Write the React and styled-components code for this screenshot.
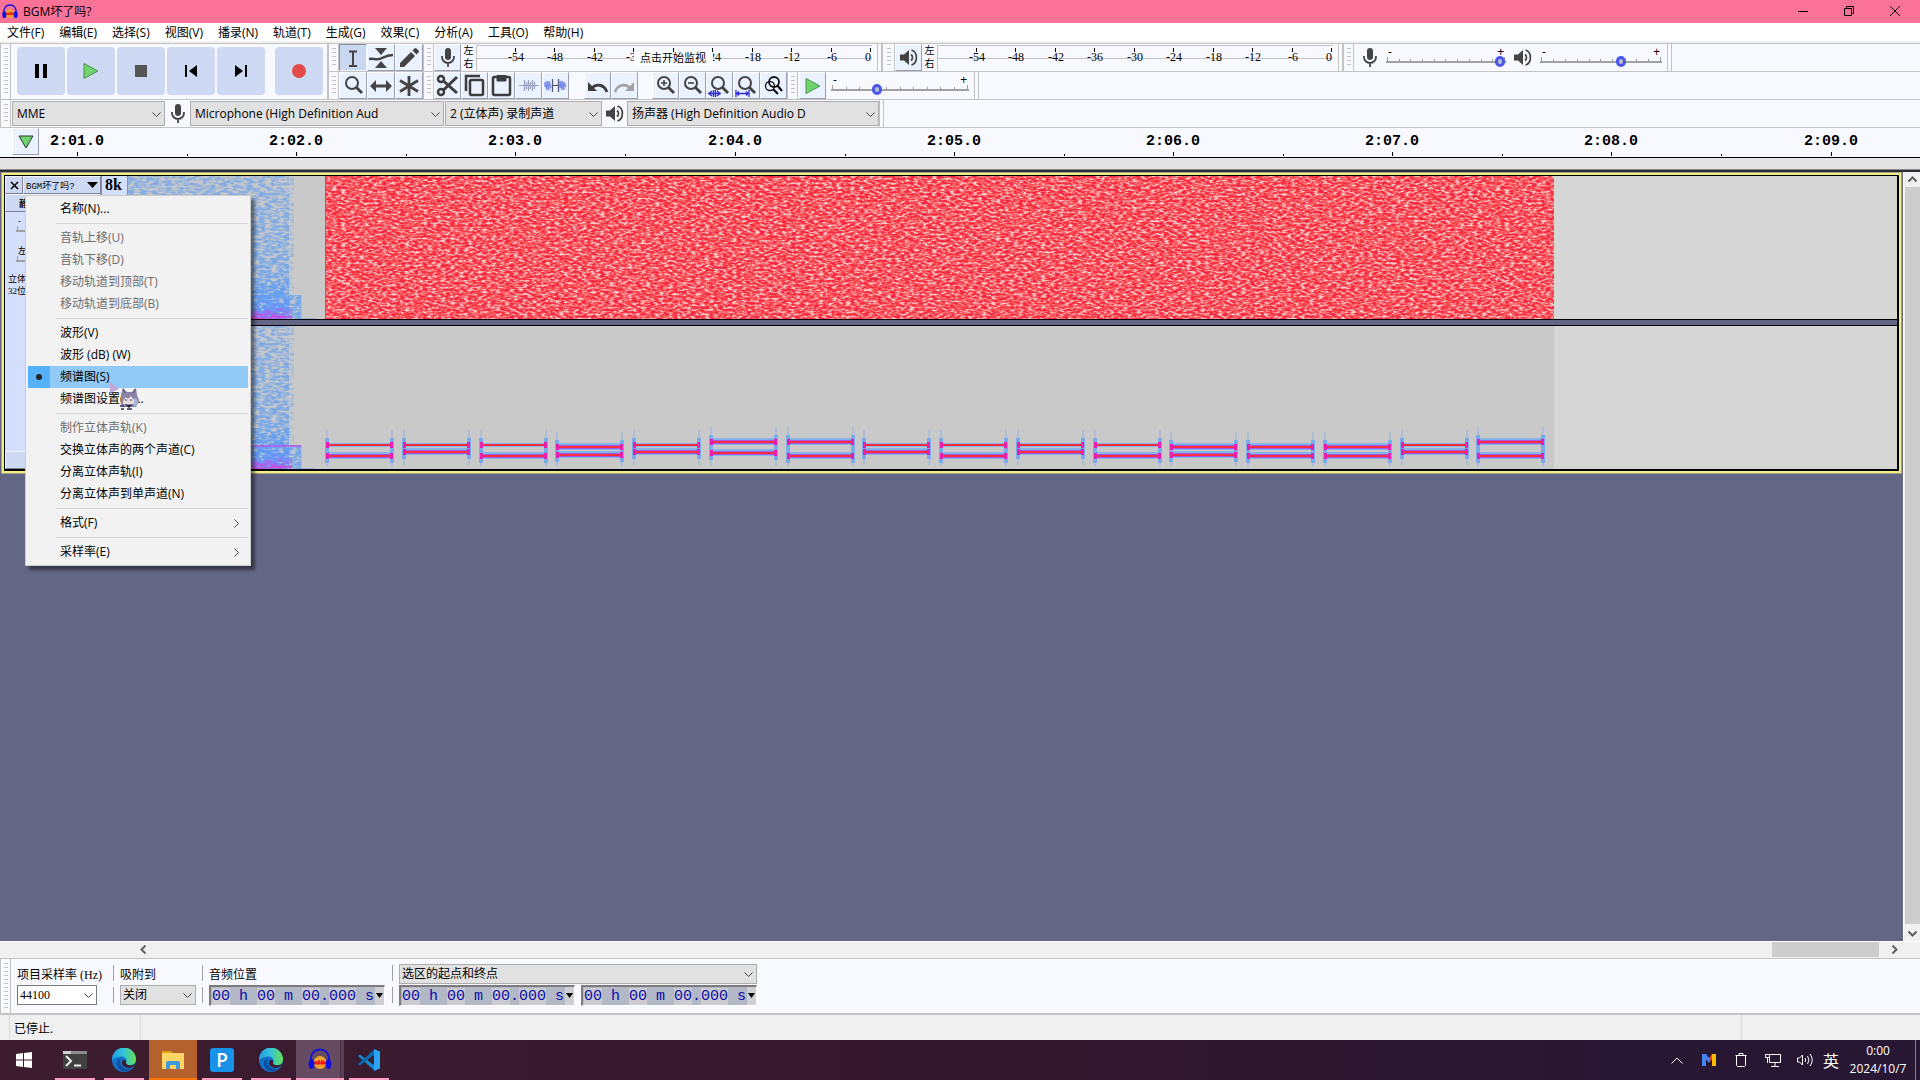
import styled, { createGlobalStyle } from 'styled-components'

const UI = '"Open Sans", "Noto Sans CJK SC", sans-serif'
const SONG = '"Liberation Serif", "Noto Sans CJK SC", serif'
const MONO = '"Liberation Mono", "Noto Sans CJK SC", monospace'

const GlobalStyle = createGlobalStyle`
  * { box-sizing: border-box; }
  body {
    margin: 0;
    background: #646685;
    font-family: ${UI};
    font-size: 12px;
    color: #000;
    overflow: hidden;
  }
  button, input, select {
    font: inherit;
    color: inherit;
    margin: 0;
    padding: 0;
    border: 0;
    border-radius: 0;
    background: none;
    outline: none;
  }
  svg { display: block; }
`

const Page = styled.div`
  min-height: 100vh;
  display: flex;
  flex-direction: column;
`

/* ---------- title + menu ---------- */

const TitleBar = styled.header`
  height: 23px;
  background: #fb7299;
  display: flex;
  align-items: center;
  padding: 0 2px;
`

const TitleText = styled.h1`
  flex: 1;
  margin: 0 0 0 5px;
  font-size: 12px;
  font-weight: 400;
  line-height: 20px;
`

const WindowButton = styled.button`
  width: 46px;
  height: 22px;
  padding-bottom: 2px;
  display: flex;
  align-items: center;
  justify-content: center;
`

const MenuBar = styled.nav`
  height: 20px;
  background: #fff;
  border-bottom: 2px solid #f0f0f0;
  display: flex;
  align-items: flex-start;
  gap: 15px;
  padding-left: 7px;
  button {
    line-height: 20px;
    white-space: nowrap;
  }
`

/* ---------- toolbars ---------- */

const Dock = styled.section`
  background: #f8f9ff;
  border-top: 1px solid #c3c3c3;
`

const DockTop = styled.div`
  display: flex;
`

const Stack = styled.div`
  flex: 1;
  min-width: 0;
`

const BarRow = styled.div`
  height: 28px;
  border-bottom: 1px solid #c3c3c3;
  display: flex;
  align-items: stretch;
`

const Transport = styled.div`
  width: 328px;
  border-right: 1px solid #c3c3c3;
  border-bottom: 1px solid #c3c3c3;
  display: flex;
  gap: 2px;
`

const Gripper = styled.div`
  width: ${(props) => props.w || 11}px;
  flex: none;
  border-left: 1px solid #c3c3c3;
  border-right: 1px solid #c3c3c3;
  display: flex;
  justify-content: center;
  padding: 4px 0;
  &::before {
    content: '';
    width: 4px;
    background: repeating-linear-gradient(#c3c3c3 0 1px, transparent 1px 4px);
  }
`

const EndCap = styled.div`
  width: ${(props) => props.w || 10}px;
  flex: none;
  display: flex;
  justify-content: flex-end;
  &::before {
    content: '';
    width: 3px;
    border-left: 1px solid #c3c3c3;
    border-right: 1px solid #c3c3c3;
  }
`

const Space = styled.div`
  width: ${(props) => props.w}px;
  flex: none;
`

const BigButton = styled.button`
  width: 48px;
  height: 48px;
  margin-top: 3px;
  margin-left: ${(props) => (props.apart ? '8px' : '0')};
  border-radius: 4px;
  background: #cdd9f2;
  display: flex;
  align-items: center;
  justify-content: center;
`

const ToolButton = styled.button`
  width: ${(props) => (props.wide ? 28 : 27)}px;
  height: 27px;
  flex: none;
  display: flex;
  align-items: center;
  justify-content: center;
  background: ${(props) => (props.on ? '#cad7f0' : '#eaf1ff')};
  border: 1px solid;
  border-color: ${(props) => (props.on ? '#8b8f9e #eef2ff #eef2ff #8b8f9e' : '#fff #9a9eb0 #9a9eb0 #fff')};
`

const IconBox = styled.span`
  width: ${(props) => props.w}px;
  flex: none;
  display: flex;
  align-items: center;
  justify-content: center;
`

const Channels = styled.div`
  width: 15px;
  flex: none;
  font-size: 10px;
  line-height: 13px;
  text-align: center;
`

const MeterSvg = styled.svg`
  flex: none;
  font-family: ${SONG};
  font-size: 12px;
`

const SliderBox = styled.label`
  width: ${(props) => props.w}px;
  flex: none;
  display: flex;
  flex-direction: column;
  padding-top: 3px;
`

const Signs = styled.span`
  display: flex;
  justify-content: space-between;
  height: 10px;
  line-height: 9px;
  padding: 0 2px;
`

const Ticks = styled.span`
  display: flex;
  justify-content: space-between;
  align-items: flex-end;
  height: 4px;
  padding: 0 1px;
  i {
    width: 1px;
    height: 2px;
    background: #a0a0a0;
  }
  i:first-child, i:last-child { height: 4px; }
`

const Range = styled.input`
  appearance: none;
  width: 100%;
  height: 12px;
  margin-top: -5px;
  &::-webkit-slider-runnable-track {
    height: 2px;
    background: #a0a0a0;
  }
  &::-webkit-slider-thumb {
    appearance: none;
    width: 10px;
    height: 11px;
    margin-top: -5px;
    border-radius: 5px;
    border: 3px solid #4a56ea;
    background: #b9bccb;
  }
`

const DropBox = styled.span`
  position: relative;
  display: block;
  flex: none;
  width: ${(props) => props.w}px;
  height: ${(props) => props.h || 25}px;
  margin-top: ${(props) => (props.h ? 0 : 1)}px;
  select, input {
    appearance: none;
    width: 100%;
    height: 100%;
    padding-left: ${(props) => (props.h ? 2 : 4)}px;
    background: ${(props) => (props.white ? '#fff' : '#e1e1e1')};
    border: 1px solid ${(props) => (props.white ? '#7a7a7a' : '#adadad')};
  }
  svg {
    position: absolute;
    right: 4px;
    top: 50%;
    margin-top: -4px;
    pointer-events: none;
  }
`

/* ---------- timeline ---------- */

const Timeline = styled.section`
  height: 30px;
  background: #f8f9ff;
  border-bottom: 1px solid #000;
  display: flex;
  svg.ruler {
    flex: 1;
    min-width: 0;
    height: 29px;
    font-family: ${MONO};
    font-size: 15px;
    font-weight: 700;
  }
`

const PinCell = styled.div`
  width: 39px;
  flex: none;
  padding-left: 12px;
`

const Strip = styled.div`
  height: 14px;
  background: #e4e4e4;
  border-bottom: 2px solid #2d2d33;
  box-shadow: inset 0 -1px #8b8b8b;
`

/* ---------- tracks ---------- */

const Workspace = styled.main`
  flex: 1;
  position: relative;
  background: #646685;
  display: flex;
`

const TrackArea = styled.div`
  flex: 1;
  min-width: 0;
  padding: 0 1px;
`

const TrackFrame = styled.div`
  border: 1px solid #a5a383;
  background: #f3ef88;
  padding: 2px;
`

const Track = styled.div`
  border: solid #000;
  border-width: 1px 2px 2px 1px;
  display: flex;
  height: 296px;
`

const TrackPanel = styled.div`
  width: 96px;
  flex: none;
  background: #d4dffd;
  display: flex;
  flex-direction: column;
  font-size: 9px;
`

const PanelHead = styled.div`
  display: flex;
  height: 18px;
`

const PanelButton = styled.button`
  display: flex;
  align-items: center;
  justify-content: ${(props) => (props.grow ? 'space-between' : 'center')};
  flex: ${(props) => (props.grow ? 1 : 'none')};
  width: ${(props) => (props.grow ? 'auto' : '18px')};
  height: 18px;
  padding: ${(props) => (props.grow ? '0 2px' : '0')};
  background: #cdd9f2;
  border: 1px solid;
  border-color: #f0f4ff #7d8191 #7d8191 #f0f4ff;
  font-family: ${MONO};
  white-space: nowrap;
`

const MuteButton = styled(PanelButton)`
  justify-content: flex-start;
  padding-left: 13px;
  font-weight: 700;
`

const PanelBody = styled.div`
  flex: 1;
  padding: 1px 4px 0 11px;
  display: flex;
  flex-direction: column;
  gap: 6px;
`

const PanelInfo = styled.div`
  line-height: 12px;
  margin-left: -8px;
  font-family: ${SONG};
`

const FreqRuler = styled.div`
  width: 27px;
  flex: none;
  border-left: 1px solid #8b8f9e;
  border-right: 1px solid #8b8f9e;
  background: #d4dffd;
  font-family: ${SONG};
  font-size: 16px;
  font-weight: 700;
  line-height: 18px;
  padding-left: 3px;
`

const Spectrum = styled.svg`
  flex: 1;
  min-width: 0;
  height: 293px;
  background: #d6d6d6;
`

const VScroll = styled.div`
  width: 17px;
  flex: none;
  background: #f0f0f0;
  border-left: 1px solid #fff;
  display: flex;
  flex-direction: column;
  align-items: center;
`

const HScroll = styled.div`
  height: 17px;
  background: #f0f0f0;
  border-top: 1px solid #fff;
  display: flex;
  padding: 0 18px 0 136px;
`

const ScrollArrow = styled.button`
  width: 15px;
  height: 15px;
  flex: none;
  display: flex;
  align-items: center;
  justify-content: center;
`

const ThumbV = styled.div`
  width: 15px;
  flex: 1;
  margin-bottom: 2px;
  background: #cdcdcd;
`

const ThumbH = styled.div`
  width: 107px;
  height: 15px;
  margin: 0 8px 0 auto;
  background: #cdcdcd;
`

/* ---------- context menu ---------- */

const Popup = styled.div`
  position: absolute;
  left: 25px;
  top: 23px;
  width: 226px;
  padding: 2px;
  background: #f2f2f2;
  border: 1px solid #ccc;
  box-shadow: 4px 4px 3px rgba(0, 0, 0, 0.45);
`

const PopupItem = styled.button`
  display: grid;
  grid-template-columns: 22px 1fr 16px;
  align-items: center;
  width: 220px;
  height: 22px;
  text-align: left;
  line-height: 22px;
  background: ${(props) => (props.on ? '#91c9f7' : 'none')};
  color: ${(props) => (props.disabled ? '#6d6d6d' : '#000')};
  span { padding-left: 10px; }
`

const Dot = styled.i`
  height: 22px;
  background: ${(props) => (props.on ? '#56b0fa' : 'none')};
  display: flex;
  align-items: center;
  justify-content: center;
  &::before {
    content: '';
    width: 6px;
    height: 6px;
    border-radius: 3px;
    background: ${(props) => (props.on ? '#222' : 'none')};
  }
`

const PopupLine = styled.div`
  height: 1px;
  margin: 3px 0 3px 28px;
  background: #d7d7d7;
`

const Pointer = styled.svg`
  position: absolute;
  left: 109px;
  top: 209px;
  pointer-events: none;
`

/* ---------- selection bar, status ---------- */

const SelectionBar = styled.section`
  height: 57px;
  background: #f8f9ff;
  border-top: 1px solid #c3c3c3;
  border-bottom: 2px solid #c3c3c3;
  display: flex;
  font-family: ${SONG};
`

const Field = styled.div`
  display: flex;
  flex-direction: column;
  gap: 1px;
  padding: 5px 0 0 6px;
  width: ${(props) => props.w}px;
  flex: none;
  label {
    line-height: 22px;
    height: 20px;
    white-space: nowrap;
  }
`

const Rules = styled.div`
  width: 1px;
  flex: none;
  display: flex;
  flex-direction: column;
  gap: 6px;
  padding-top: 6px;
  &::before, &::after {
    content: '';
    height: 16px;
    background: #a0a0a0;
  }
`

const Pair = styled.div`
  display: flex;
  gap: 6px;
`

const TimeBox = styled.div`
  width: 176px;
  height: 21px;
  display: flex;
  background: #b3b8c7;
  border: solid;
  border-width: 2px 1px 1px 2px;
  border-color: #7c7c7c #fff #fff #7c7c7c;
  font-family: ${MONO};
  font-size: 15px;
  line-height: 20px;
  color: #0a0aa8;
  white-space: pre;
  padding-left: 1px;
  span { flex: 1; }
  b {
    font-weight: 400;
    background: #cbcbd1;
  }
  button {
    width: 9px;
    background: #cfcfd3;
  }
`

const StatusBar = styled.footer`
  height: 25px;
  background: #f0f0f0;
  display: flex;
  padding-left: 9px;
  line-height: 27px;
  span {
    border-left: 1px solid #d9d9d9;
    padding-left: 4px;
  }
`

const StatusCell = styled.span`
  width: ${(props) => (props.w ? props.w + 'px' : 'auto')};
  flex: ${(props) => (props.w ? 'none' : 1)};
`

/* ---------- taskbar ---------- */

const Taskbar = styled.footer`
  height: 40px;
  background: linear-gradient(90deg, #3e1c30, #34182c 50%, #281733 85%);
  color: #fff;
  display: flex;
  align-items: stretch;
`

const StartButton = styled.button`
  width: 48px;
  margin-right: 3px;
  display: flex;
  align-items: center;
  justify-content: center;
`

const TaskButton = styled.button`
  width: 48px;
  margin-right: 1px;
  display: flex;
  flex-direction: column;
  align-items: center;
  justify-content: space-between;
  padding-top: 8px;
  background: ${(props) => props.tint || 'none'};
  &::after {
    content: '';
    width: ${(props) => (props.tint ? 48 : 40)}px;
    height: 2px;
    background: ${(props) => props.line || '#ff9fc3'};
  }
`

const Tray = styled.div`
  margin-left: auto;
  display: flex;
  align-items: center;
`

const TrayButton = styled.button`
  width: ${(props) => (props.narrow ? 20 : 32)}px;
  height: 40px;
  display: flex;
  align-items: center;
  justify-content: center;
  font-size: 16px;
`

const Clock = styled.time`
  width: 74px;
  text-align: center;
  line-height: 18px;
`

const ShowDesktop = styled.button`
  width: 5px;
  height: 40px;
  border-left: 1px solid #8d8192;
`

/* ---------- icons ---------- */

const Chevron = ({ dir = 'down', size = 9, color = '#444', w = 1 }) => {
  const d = {
    down: 'M0.5 2.5 4.5 6.5 8.5 2.5',
    up: 'M0.5 6.5 4.5 2.5 8.5 6.5',
    left: 'M6.5 0.5 2.5 4.5 6.5 8.5',
    right: 'M2.5 0.5 6.5 4.5 2.5 8.5',
  }[dir]
  return (
    <svg width={size} height={size} viewBox="0 0 9 9" fill="none" stroke={color} strokeWidth={w}>
      <path d={d} />
    </svg>
  )
}

const Audacity = ({ size }) => (
  <svg width={size} height={size} viewBox="0 0 24 24">
    <circle cx="12" cy="14.500" r="6.500" fill="#f0a030" />
    <path d="M6 15l2-2 1 3 2-4 1 4 2-4 1 4 1-3 2 2-2 1H8z" fill="#f01818" stroke="#f01818" />
    <path d="M3 14C2 6 6 1.500 12 1.500S22 6 21 14" fill="none" stroke="#1414d8" strokeWidth="2" />
    <ellipse cx="3.500" cy="16" rx="3" ry="5" fill="#1010e0" />
    <ellipse cx="20.500" cy="16" rx="3" ry="5" fill="#1010e0" />
  </svg>
)

const Mic = () => (
  <svg width="16" height="21" viewBox="0 0 16 21" fill="none" stroke="#444">
    <rect x="5" y="1" width="6" height="12" rx="3" fill="#444" stroke="none" />
    <path d="M2 9v1a6 6 0 0 0 12 0V9M8 16v4" strokeWidth="1.800" />
  </svg>
)

const Speaker = () => (
  <svg width="20" height="19" viewBox="0 0 20 19" fill="none" stroke="#444" strokeWidth="1.700">
    <path d="M1 6.500h4L10 2v15l-5-4.500H1z" fill="#444" stroke="none" />
    <path d="M12 6.500c2 1.500 2 4.500 0 6M12.500 2c6.500 2 6.500 13 0 15" />
  </svg>
)

const Glass = ({ children }) => (
  <svg width="25" height="25" viewBox="0 0 25 25" fill="none" stroke="#444" strokeWidth="2">
    <circle cx="11" cy="10" r="6" />
    <path d="M15.500 14.500 21 20" strokeWidth="2.800" />
    {children}
  </svg>
)

const toolIcons = {
  select: (
    <svg width="24" height="24" viewBox="0 0 24 24" stroke="#444" strokeWidth="2" fill="none">
      <path d="M8 5.500h8M12 5v15M8 20h8" />
    </svg>
  ),
  envelope: (
    <svg width="26" height="24" viewBox="0 0 26 24" fill="#444">
      <path d="M7 2h12l-6 7zM7 22h12l-6-7z" />
      <path d="M1 13c8-1 8 2 13-1 4-2 6-3 11-3" fill="none" stroke="#444" strokeWidth="2.500" />
    </svg>
  ),
  draw: (
    <svg width="24" height="24" viewBox="0 0 24 24" fill="#444">
      <path d="M3 21v-4L14 6l4 4L7 21zM15.500 4.500l2-2q1-1 2 0l2 2q1 1 0 2l-2 2z" />
    </svg>
  ),
  zoom: <Glass />,
  shift: (
    <svg width="24" height="24" viewBox="0 0 24 24" fill="#444">
      <path d="M1 12l6-6v4.500h10V6l6 6-6 6v-4.500H7V18z" />
    </svg>
  ),
  multi: (
    <svg width="24" height="24" viewBox="0 0 24 24" stroke="#444" strokeWidth="2.800">
      <path d="M12 2v20M3 6.500l18 11M21 6.500l-18 11" />
    </svg>
  ),
  cut: (
    <svg width="25" height="25" viewBox="0 0 25 25" fill="none" stroke="#3c3c3c" strokeWidth="2.500">
      <circle cx="6" cy="6" r="3" />
      <circle cx="6" cy="19" r="3" />
      <path d="M8.500 8 22 20M8.500 17 22 4" strokeWidth="3" />
    </svg>
  ),
  copy: (
    <svg width="25" height="25" viewBox="0 0 25 25" fill="none" stroke="#3c3c3c" strokeWidth="2.500">
      <rect x="8" y="7" width="13" height="15" rx="1.500" />
      <path d="M4 18V3h14" />
    </svg>
  ),
  paste: (
    <svg width="25" height="25" viewBox="0 0 25 25" fill="none" stroke="#3c3c3c" strokeWidth="2.500">
      <rect x="4" y="4" width="17" height="18" rx="1.500" />
      <path d="M8 2.500h9V8H8z" fill="#3c3c3c" strokeWidth="1" />
    </svg>
  ),
  trim: (
    <svg width="25" height="25" viewBox="0 0 25 25" stroke="#9aa0c0" fill="none">
      <path d="M3 12.500h20" />
      <path d="M8.500 7v11M10.500 9v7M12.500 7v11M14.500 9v7M16.500 7v11M18.500 9v7" strokeWidth="1.300" />
    </svg>
  ),
  silence: (
    <svg width="25" height="25" viewBox="0 0 25 25" stroke="#7b8bea" fill="none">
      <path d="M2 14V9l2 8V8l2 9V8l2 7M17 15V8l2 9V8l2 9V9l2 5" strokeWidth="1.300" />
      <path d="M9 12.500h7" stroke="#444" />
      <path d="M9.500 6v13M15.500 6v13" stroke="#555a78" strokeWidth="1.300" />
    </svg>
  ),
  undo: (
    <svg width="25" height="25" viewBox="0 0 25 25" fill="none" stroke="#3c3c3c">
      <path d="M6 16c5-6 13-5 16 3" strokeWidth="2.800" />
      <path d="M3 9v9h9z" fill="#3c3c3c" stroke="none" />
    </svg>
  ),
  redo: (
    <svg width="25" height="25" viewBox="0 0 25 25" fill="none" stroke="#a2a2a2">
      <path d="M19 16c-5-6-13-5-16 3" strokeWidth="2.500" />
      <path d="M22 9v9h-9z" fill="#a2a2a2" stroke="none" />
    </svg>
  ),
  zoomIn: (
    <Glass>
      <path d="M8 10h6M11 7v6" strokeWidth="1.600" />
    </Glass>
  ),
  zoomOut: (
    <Glass>
      <path d="M8 10h6" strokeWidth="1.600" />
    </Glass>
  ),
  zoomSel: (
    <Glass>
      <path d="M1 20.500h13M5 18l-3 2.500L5 23M10 18l3 2.500-3 2.500M6.500 17v7M8.500 17v7" stroke="#2b2bd0" strokeWidth="1.300" />
    </Glass>
  ),
  zoomFit: (
    <Glass>
      <path d="M2 20.500h13M2 17v7M15 17v7M5 18.500l-2 2 2 2M12 18.500l2 2-2 2" stroke="#2b2bd0" strokeWidth="1.300" />
    </Glass>
  ),
  zoomToggle: (
    <svg width="25" height="25" viewBox="0 0 25 25" fill="none" stroke="#111" strokeWidth="1.800">
      <circle cx="13" cy="9" r="5" />
      <circle cx="9" cy="13" r="4.500" strokeWidth="1.300" />
      <path d="M16 12l5 6M12 16l5 5" strokeWidth="2.200" />
    </svg>
  ),
  play: (
    <svg width="18" height="18" viewBox="0 0 18 18">
      <path d="M2 1.500 16 9 2 16.500z" fill="#6ed46e" stroke="#4f8f4f" />
    </svg>
  ),
}

const transport = [
  ['暂停', <svg width="14" height="16"><path d="M1 1h4v14H1zM9 1h4v14H9z" /></svg>],
  ['播放', toolIcons.play],
  ['停止', <svg width="12" height="12"><path d="M0 0h12v12H0z" fill="#555" /></svg>],
  ['跳至开头', <svg width="14" height="14"><path d="M1 1h2v12H1zM13 1v12L5 7z" /></svg>],
  ['跳至结尾', <svg width="14" height="14"><path d="M11 1h2v12h-2zM1 1v12l8-6z" /></svg>],
  ['录制', <svg width="14" height="14"><circle cx="7" cy="7" r="7" fill="#e34a4a" /></svg>],
]

const Edge = () => (
  <svg width="24" height="24" viewBox="0 0 24 24">
    <defs>
      <linearGradient id="edgeTop" x1="0" x2="1">
        <stop offset="0" stopColor="#1f9de0" />
        <stop offset="0.500" stopColor="#35c4d7" />
        <stop offset="1" stopColor="#66e04f" />
      </linearGradient>
    </defs>
    <circle cx="12" cy="12" r="12" fill="#1272cc" />
    <path d="M0 12A12 12 0 0 1 24 11c0 5-4 7-8 6-3-1-2-3-1.500-4C15 9 9 6 0 12z" fill="url(#edgeTop)" />
    <path d="M9 11c-3 4 1 11 10 10-7 6-16-1-14-7 1-3 3-3.500 4-3z" fill="#0c4f9e" />
    <path d="M14.500 13c-2 3 2 6 9 3-2 4-9 6-13 1-1.500-3 0-7 4-4z" fill="#3b1c30" />
  </svg>
)

/* ---------- data ---------- */

const menus = ['文件(F)', '编辑(E)', '选择(S)', '视图(V)', '播录(N)', '轨道(T)', '生成(G)', '效果(C)', '分析(A)', '工具(O)', '帮助(H)']

const popup = [
  { text: '名称(N)...' },
  null,
  { text: '音轨上移(U)', disabled: true },
  { text: '音轨下移(D)', disabled: true },
  { text: '移动轨道到顶部(T)', disabled: true },
  { text: '移动轨道到底部(B)', disabled: true },
  null,
  { text: '波形(V)' },
  { text: '波形 (dB) (W)' },
  { text: '频谱图(S)', on: true },
  { text: '频谱图设置(P)...' },
  null,
  { text: '制作立体声轨(K)', disabled: true },
  { text: '交换立体声的两个声道(C)' },
  { text: '分离立体声轨(I)' },
  { text: '分离立体声到单声道(N)' },
  null,
  { text: '格式(F)', sub: true },
  null,
  { text: '采样率(E)', sub: true },
]

// upper and lower tone of every beep, measured from the top of the channel
const tones = [
  [119, 130], [119, 126], [119, 130], [121, 129], [119, 126], [116, 127], [116, 130], [119, 126],
  [119, 130], [119, 126], [119, 130], [121, 129], [121, 130], [121, 130], [119, 126], [116, 130],
]

const dbs = [-54, -48, -42, -36, -30, -24, -18, -12, -6, 0]

/* ---------- parts ---------- */

function Meter({ hint }) {
  return (
    <MeterSvg width="396" height="27">
      <path d="M0.5 1v26M0 1.500h396M0 14.500h396" stroke="#c3c3c3" fill="none" />
      {dbs.map((db, i) => {
        const x = Math.round(39.5 * (i + 1))
        return (
          <g key={db}>
            <path d={`M${x - 0.5} 4v4`} stroke="#000" />
            <text x={db ? x : x - 3} y="17" textAnchor="middle">{db}</text>
          </g>
        )
      })}
      {hint && (
        <>
          <rect x="158" y="8" width="79" height="14" fill="#fcfdff" />
          <text x="197" y="18" textAnchor="middle" fontSize="11">{hint}</text>
        </>
      )}
    </MeterSvg>
  )
}

function Slider({ w, value, name, signs = ['-', '+'] }) {
  return (
    <SliderBox w={w}>
      <Signs>{signs.map((s) => <span key={s}>{s}</span>)}</Signs>
      <Ticks>{Array.from({ length: 11 }, (_, i) => <i key={i} />)}</Ticks>
      <Range type="range" defaultValue={value} aria-label={name} />
    </SliderBox>
  )
}

function Drop({ w, h, id, name, children }) {
  return (
    <DropBox w={w} h={h}>
      <select id={id} aria-label={name}><option>{children}</option></select>
      <Chevron />
    </DropBox>
  )
}

const Tool = ({ icon, ...rest }) => (
  <ToolButton aria-label={icon} {...rest}>{toolIcons[icon]}</ToolButton>
)

function Ruler() {
  return (
    <svg className="ruler">
      {Array.from({ length: 9 }, (_, i) => {
        const x = Math.round(38 + i * 219.2)
        return (
          <g key={i}>
            <text x={x} y="17" textAnchor="middle">{`2:0${i + 1}.0`}</text>
            <path d={`M${x + 0.5} 24v4M${x + 110.5} 26v2`} stroke="#000" />
          </g>
        )
      })}
    </svg>
  )
}

function Tone({ x, y, thin }) {
  return (
    <g>
      <rect x={x} y={y - (thin ? 2 : 4)} width="65" height={thin ? 4 : 7} fill="#6aa9f5" opacity="0.700" />
      <rect x={x} y={y - (thin ? 1 : 2)} width="65" height={thin ? 2 : 4} fill="#a05af0" />
      <rect x={x} y={y - 1} width="65" height="2" fill="#fb2a3c" />
      {[x - 1, x + 63].map((ex) => (
        <rect key={ex} x={ex} y={y - 3} width="3" height="6" fill="#e81fae" />
      ))}
    </g>
  )
}

function Beeps() {
  return tones.map(([a, b], i) => {
    const x = Math.round(199 + i * 76.76)
    return (
      <g key={i} shapeRendering="crispEdges">
        {[x - 2, x + 63].map((ex) => (
          <g key={ex} fill="#6ea6f0">
            <rect x={ex} y={a - 7} width="4" height={b - a + 14} opacity="0.850" />
            <rect x={ex + 1} y={a - 15} width="2" height={Math.min(b - a + 28, 156 - a)} opacity="0.300" />
          </g>
        ))}
        <Tone x={x} y={b} />
        <Tone x={x} y={a} thin={a === 119} />
      </g>
    )
  })
}

function Spectrogram() {
  return (
    <Spectrum aria-label="频谱图">
      <defs>
        <filter id="loud" x="0" y="0" width="1" height="1" colorInterpolationFilters="sRGB">
          <feTurbulence type="fractalNoise" baseFrequency="0.220 0.450" numOctaves="3" seed="7" />
          <feColorMatrix values="2.200 0 0 0 -0.620  2.200 0 0 0 -0.620  2.200 0 0 0 -0.620  0 0 0 0 1" />
          <feComponentTransfer>
            <feFuncR type="table" tableValues="0.960 0.980 0.990 0.980 0.970" />
            <feFuncG type="table" tableValues="0.140 0.200 0.360 0.580 0.800" />
            <feFuncB type="table" tableValues="0.280 0.240 0.390 0.600 0.800" />
          </feComponentTransfer>
        </filter>
        <filter id="quiet" x="0" y="0" width="1" height="1" colorInterpolationFilters="sRGB">
          <feTurbulence type="fractalNoise" baseFrequency="0.160 0.400" numOctaves="3" seed="3" />
          <feColorMatrix values="0 0 0 0 0  0 0 0 0 0  0 0 0 0 0  1 0 0 0 0" result="n" />
          <feComposite in="n" in2="SourceAlpha" operator="arithmetic" k2="3" k3="2" k4="-1.800" result="m" />
          <feComposite in="SourceGraphic" in2="m" operator="in" result="c" />
          <feComponentTransfer>
            <feFuncA type="linear" slope="1.800" />
          </feComponentTransfer>
        </filter>
        <linearGradient id="haze" x1="0" y1="0" x2="0" y2="1">
          <stop offset="0" stopColor="#6aa2ee" stopOpacity="0.400" />
          <stop offset="0.700" stopColor="#6aa2ee" stopOpacity="0.480" />
          <stop offset="1" stopColor="#5f9bf8" stopOpacity="0.750" />
        </linearGradient>
        <linearGradient id="bass" x1="0" y1="0" x2="0" y2="1">
          <stop offset="0" stopColor="#a06af0" stopOpacity="0.080" />
          <stop offset="1" stopColor="#e03cdc" stopOpacity="0.550" />
        </linearGradient>
      </defs>

      <rect width="1426" height="293" fill="#c9c9c9" />

      {[0, 150].map((top) => (
        <g key={top} transform={`translate(0 ${top})`}>
          <rect width="161" height="143" fill="url(#haze)" filter="url(#quiet)" />
          <rect x="161" width="5" height="143" fill="#6aa2ee" fillOpacity="0.280" filter="url(#quiet)" />
          <rect x="161" y="119" width="12" height="24" fill="#6aa2ee" fillOpacity="0.500" filter="url(#quiet)" />
          <path d="M164 119.500h9v23h14" stroke="#7faaf0" fill="none" opacity="0.600" />
          <rect y="125" width="164" height="18" fill="url(#bass)" filter="url(#quiet)" />
        </g>
      ))}
      <rect y="269" width="173" height="2" fill="#b95be8" opacity="0.800" />

      <rect x="197" width="1229" height="143" fill="#fa6066" filter="url(#loud)" />
      <rect x="197" width="1" height="143" fill="#e02ad0" />

      <g transform="translate(0 150)"><Beeps /></g>

      <rect y="143" width="100%" height="7" fill="#000" />
      <rect y="144" width="100%" height="5" fill="#646685" />
    </Spectrum>
  )
}

function TimeField({ name }) {
  return (
    <TimeBox role="group" aria-label={name}>
      <span><b>00</b> h <b>00</b> m <b>00</b>.<b>000</b> s</span>
      <button aria-label="格式">
        <svg width="9" height="6"><path d="M1 0h7L4.500 5z" /></svg>
      </button>
    </TimeBox>
  )
}

export default function App() {
  return (
    <Page>
      <GlobalStyle />
      <TitleBar>
        <Audacity size={16} />
        <TitleText>BGM坏了吗?</TitleText>
        <WindowButton aria-label="最小化">
          <svg width="10" height="10"><path d="M0 5.500h10" stroke="#000" /></svg>
        </WindowButton>
        <WindowButton aria-label="还原">
          <svg width="10" height="10" fill="none" stroke="#000"><path d="M0.500 2.500h7v7h-7zM2.500 2.500v-2h7v7h-2" /></svg>
        </WindowButton>
        <WindowButton aria-label="关闭">
          <svg width="10" height="10" stroke="#000"><path d="M0 0l10 10M10 0L0 10" /></svg>
        </WindowButton>
      </TitleBar>

      <MenuBar>
        {menus.map((m) => <button key={m}>{m}</button>)}
      </MenuBar>

      <Dock>
        <DockTop>
          <Transport>
            <Gripper />
            <Space w={2} />
            {transport.map(([name, icon]) => (
              <BigButton key={name} aria-label={name} apart={name === '录制' ? 1 : undefined}>{icon}</BigButton>
            ))}
          </Transport>
          <Stack>
            <BarRow>
              <Gripper />
              <Tool icon="select" wide="1" on="1" />
              <Tool icon="envelope" wide="1" />
              <Tool icon="draw" wide="1" />
              <Gripper />
              <ToolButton aria-label="录制电平"><Mic /></ToolButton>
              <Channels>左<br />右</Channels>
              <Meter hint="点击开始监视" />
              <EndCap />
              <Gripper w={13} />
              <ToolButton aria-label="播放电平"><Speaker /></ToolButton>
              <Channels>左<br />右</Channels>
              <Meter />
              <EndCap />
              <Gripper />
              <IconBox w={32}><Mic /></IconBox>
              <Slider w={120} value={99} name="录制音量" />
              <IconBox w={34}><Speaker /></IconBox>
              <Slider w={122} value={68} name="播放音量" />
              <EndCap />
            </BarRow>
            <BarRow>
              <Gripper />
              <Tool icon="zoom" wide="1" />
              <Tool icon="shift" wide="1" />
              <Tool icon="multi" wide="1" />
              <Gripper />
              <Tool icon="cut" />
              <Tool icon="copy" />
              <Tool icon="paste" />
              <Tool icon="trim" />
              <Tool icon="silence" />
              <Space w={15} />
              <Tool icon="undo" />
              <Tool icon="redo" />
              <Space w={14} />
              <Tool icon="zoomIn" />
              <Tool icon="zoomOut" />
              <Tool icon="zoomSel" />
              <Tool icon="zoomFit" />
              <Tool icon="zoomToggle" />
              <Gripper />
              <Space w={1} />
              <Tool icon="play" />
              <Space w={5} />
              <Slider w={138} value={32} name="播放速度" />
              <EndCap />
            </BarRow>
          </Stack>
        </DockTop>
        <BarRow>
          <Gripper />
          <Space w={1} />
          <Drop w={153} name="音频主机">MME</Drop>
          <IconBox w={25}><Mic /></IconBox>
          <Drop w={254} name="录制设备">Microphone (High Definition Aud</Drop>
          <Space w={1} />
          <Drop w={157} name="录制声道">2 (立体声) 录制声道</Drop>
          <IconBox w={25}><Speaker /></IconBox>
          <Drop w={252} name="播放设备">扬声器 (High Definition Audio D</Drop>
          <EndCap w={5} />
        </BarRow>
      </Dock>

      <Timeline>
        <PinCell>
          <ToolButton aria-label="固定播放头">
            <svg width="16" height="14"><path d="M1 1h14L8 13z" fill="#6ed46e" stroke="#333" /></svg>
          </ToolButton>
        </PinCell>
        <Ruler />
      </Timeline>
      <Strip />

      <Workspace>
        <TrackArea>
          <TrackFrame>
            <Track>
              <TrackPanel>
                <PanelHead>
                  <PanelButton aria-label="关闭轨道">
                    <svg width="9" height="9" stroke="#000" strokeWidth="1.500"><path d="M1 1l7 7M8 1L1 8" /></svg>
                  </PanelButton>
                  <PanelButton grow="1">
                    BGM坏了吗?
                    <svg width="11" height="6"><path d="M0 0h11L5.500 6z" /></svg>
                  </PanelButton>
                </PanelHead>
                <PanelHead>
                  <MuteButton grow="1">静</MuteButton>
                </PanelHead>
                <PanelBody>
                  <Slider w={80} value={50} name="增益" />
                  <Slider w={80} value={50} name="声像" signs={['左', '右']} />
                  <PanelInfo>立体声<br />32位</PanelInfo>
                </PanelBody>
                <PanelHead><PanelButton grow="1" aria-label="折叠" /></PanelHead>
              </TrackPanel>
              <FreqRuler>8k</FreqRuler>
              <Spectrogram />
            </Track>
          </TrackFrame>
        </TrackArea>
        <VScroll>
          <ScrollArrow aria-label="向上"><Chevron dir="up" w={2} color="#606060" /></ScrollArrow>
          <ThumbV />
          <ScrollArrow aria-label="向下"><Chevron w={2} color="#606060" /></ScrollArrow>
        </VScroll>

        <Popup role="menu">
          {popup.map((item, i) => item ? (
            <PopupItem key={i} role="menuitem" on={item.on ? 1 : undefined} disabled={item.disabled}>
              <Dot on={item.on ? 1 : undefined} />
              <span>{item.text}</span>
              {item.sub && <Chevron dir="right" />}
            </PopupItem>
          ) : <PopupLine key={i} />)}
        </Popup>

        <Pointer width="32" height="30" viewBox="0 0 32 30">
          <path d="M1 1v11l9-4z" fill="#c3a6d8" />
          <path d="M12 25V13l2-6 4 4h5l4-4 1 7 2 5-3 7H13z" fill="#8a84a8" />
          <path d="M14 20l3-4 2 2 3-3 3 4v4H14z" fill="#e9dcdf" />
          <path d="M25 17l3 1 1 5-4 3z" fill="#a9b4e0" />
          <path d="M11 25h4M17 24l3 2 3-2M12 28h3M18 28h5" stroke="#3c3656" strokeWidth="1.500" />
          <path d="M14 8l2 4M26 8l-2 4M16 19h2M21 19h2" stroke="#4d4770" />
        </Pointer>
      </Workspace>

      <HScroll>
        <ScrollArrow aria-label="向左"><Chevron dir="left" w={2} color="#606060" /></ScrollArrow>
        <ThumbH />
        <ScrollArrow aria-label="向右"><Chevron dir="right" w={2} color="#606060" /></ScrollArrow>
      </HScroll>

      <SelectionBar>
        <Gripper />
        <Field w={102}>
          <label htmlFor="rate">项目采样率 (Hz)</label>
          <DropBox w={80} h={20} white="1">
            <input id="rate" defaultValue="44100" />
            <Chevron />
          </DropBox>
        </Field>
        <Rules />
        <Field w={88}>
          <label htmlFor="snap">吸附到</label>
          <Drop w={76} h={20} id="snap">关闭</Drop>
        </Field>
        <Rules />
        <Field w={189}>
          <label>音频位置</label>
          <TimeField name="音频位置" />
        </Field>
        <Rules />
        <Field w={370}>
          <Drop w={358} h={20} name="选区">选区的起点和终点</Drop>
          <Pair>
            <TimeField name="起点" />
            <TimeField name="终点" />
          </Pair>
        </Field>
      </SelectionBar>

      <StatusBar>
        <StatusCell w={131}>已停止.</StatusCell>
        <StatusCell />
        <StatusCell w={179} />
      </StatusBar>

      <Taskbar>
        <StartButton aria-label="开始">
          <svg width="16" height="16" fill="#fff"><path d="M0 2l7-1v6.500H0zM8 1l8-1v7.500H8zM0 8.500h7V15l-7-1zM8 8.500h8V16l-8-1z" /></svg>
        </StartButton>
        <TaskButton aria-label="终端">
          <svg width="24" height="24" viewBox="0 0 24 24">
            <rect y="3" width="24" height="18" rx="1" fill="#414141" />
            <path d="M0 3h24v3H0z" fill="#8c8c8c" />
            <path d="M0 3h8v3H0z" fill="#d0d0d0" />
            <path d="M3 8l5 5-5 5M11 17.500h7" stroke="#eee" strokeWidth="2" fill="none" />
          </svg>
        </TaskButton>
        <TaskButton aria-label="Edge"><Edge /></TaskButton>
        <TaskButton aria-label="文件资源管理器" tint="#b5612e" line="#ff7500">
          <svg width="24" height="24" viewBox="0 0 24 24">
            <path d="M1 3h9l2 3H1z" fill="#e0a010" />
            <path d="M1 5h22v16H1z" fill="#ffd566" />
            <path d="M5 21v-6q0-2 2-2h10q2 0 2 2v6h-4v-4H9v4z" fill="#3f9adb" />
          </svg>
        </TaskButton>
        <TaskButton aria-label="P">
          <svg width="24" height="24" viewBox="0 0 24 24">
            <rect width="24" height="24" rx="3" fill="#1792e6" />
            <text x="12" y="19" textAnchor="middle" fontSize="19" fontFamily="Open Sans" fontWeight="600" fill="#fff">P</text>
          </svg>
        </TaskButton>
        <TaskButton aria-label="Edge"><Edge /></TaskButton>
        <TaskButton aria-label="Audacity" tint="linear-gradient(90deg, #664b60 44px, #4a2f42 44px 45px, #5a4054 45px)">
          <Audacity size={24} />
        </TaskButton>
        <TaskButton aria-label="VS Code">
          <svg width="24" height="24" viewBox="0 0 24 24">
            <path d="M1 8l2-1.500L18 18v5z" fill="#1387d0" />
            <path d="M1 16l2 1.500L18 6V1z" fill="#0a6cb0" />
            <path d="M17 1l6 2.500v17L17 23z" fill="#2aa5f3" />
          </svg>
        </TaskButton>

        <Tray>
          <TrayButton aria-label="显示隐藏的图标">
            <svg width="12" height="7" fill="none" stroke="#fff"><path d="M0.500 6.500 6 1l5.500 5.500" /></svg>
          </TrayButton>
          <TrayButton aria-label="M">
            <svg width="14" height="12" viewBox="0 0 14 12">
              <path d="M0 0h4v12H0z" fill="#4285f4" />
              <path d="M10 0h4v12h-4z" fill="#fbbc04" />
              <path d="M4 0l3 4v5L3 4z" fill="#4285f4" />
              <path d="M10 0v5L7 9V4z" fill="#ea4335" />
            </svg>
          </TrayButton>
          <TrayButton aria-label="回收站">
            <svg width="12" height="14" fill="none" stroke="#fff"><path d="M0.500 2.500h11M4 2V0.500h4V2M1.500 2.500v10l1 1h7l1-1v-10" /></svg>
          </TrayButton>
          <TrayButton aria-label="网络">
            <svg width="16" height="14" fill="none" stroke="#fff"><path d="M5 1.500h10.500v8H4.500V5M0.500 1.500h4v3h-4zM2.500 5v5M10 10v3M6 13.500h8" /></svg>
          </TrayButton>
          <TrayButton aria-label="音量">
            <svg width="17" height="14" fill="none" stroke="#fff"><path d="M0.500 5h2l3-3v10l-3-3h-2zM8 5q1.500 2 0 4M10.500 3q3 4 0 8M13 1q4.500 6 0 12" /></svg>
          </TrayButton>
          <TrayButton narrow="1">英</TrayButton>
          <Clock>0:00<br />2024/10/7</Clock>
          <ShowDesktop aria-label="显示桌面" />
        </Tray>
      </Taskbar>
    </Page>
  )
}
